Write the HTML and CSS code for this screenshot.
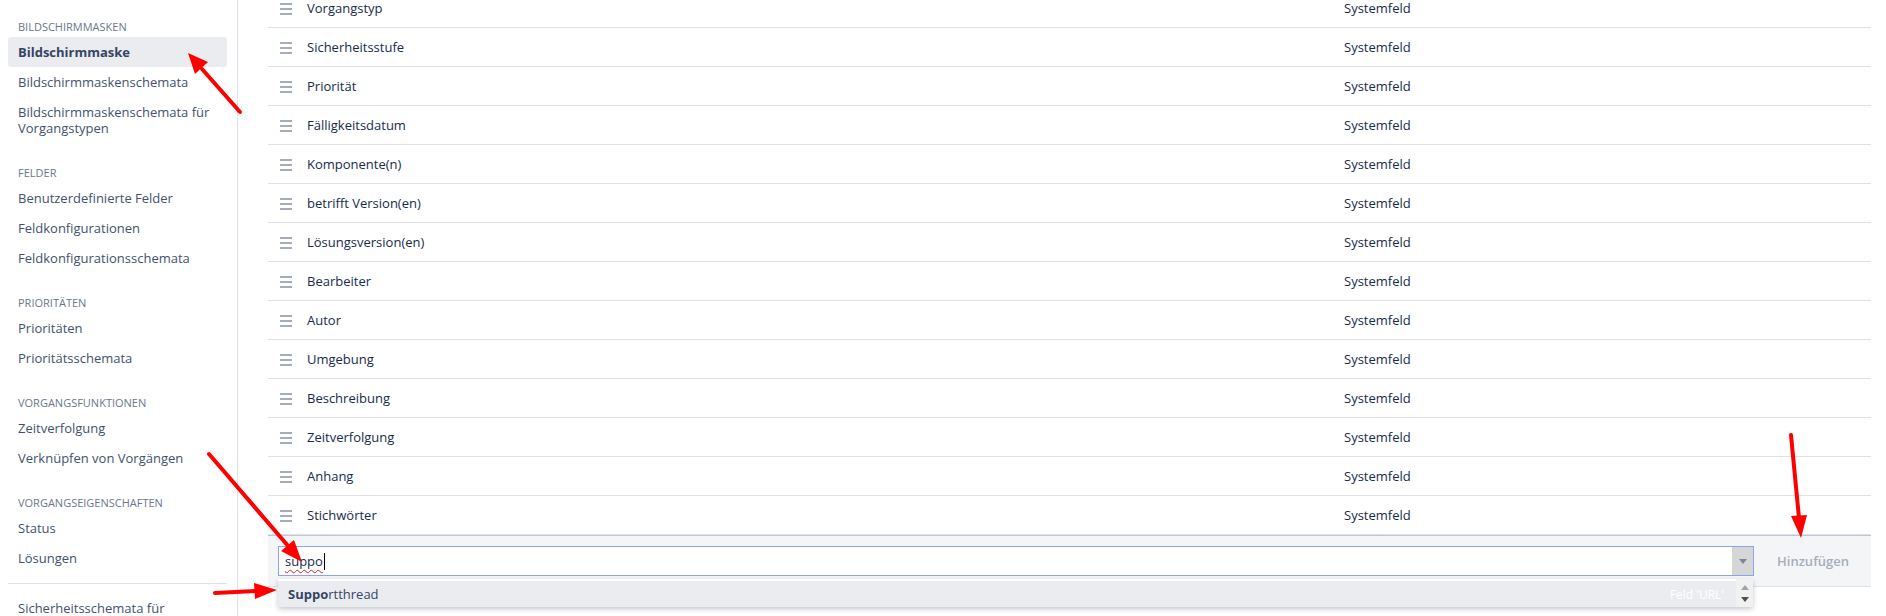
FILE: index.html
```html
<!DOCTYPE html>
<html lang="de">
<head>
<meta charset="utf-8">
<title>Bildschirmmaske</title>
<link rel="stylesheet" href="styles.css">
</head>
<body>
<div class="page">
  <aside class="sidebar">
    <div class="section">
      <h4 class="sec-title">Bildschirmmasken</h4>
      <ul class="nav">
        <li class="nav-item active">Bildschirmmaske</li>
        <li class="nav-item">Bildschirmmaskenschemata</li>
        <li class="nav-item">Bildschirmmaskenschemata für Vorgangstypen</li>
      </ul>
    </div>
    <div class="section">
      <h4 class="sec-title">Felder</h4>
      <ul class="nav">
        <li class="nav-item">Benutzerdefinierte Felder</li>
        <li class="nav-item">Feldkonfigurationen</li>
        <li class="nav-item">Feldkonfigurationsschemata</li>
      </ul>
    </div>
    <div class="section">
      <h4 class="sec-title">Prioritäten</h4>
      <ul class="nav">
        <li class="nav-item">Prioritäten</li>
        <li class="nav-item">Prioritätsschemata</li>
      </ul>
    </div>
    <div class="section">
      <h4 class="sec-title">Vorgangsfunktionen</h4>
      <ul class="nav">
        <li class="nav-item">Zeitverfolgung</li>
        <li class="nav-item">Verknüpfen von Vorgängen</li>
      </ul>
    </div>
    <div class="section">
      <h4 class="sec-title">Vorgangseigenschaften</h4>
      <ul class="nav">
        <li class="nav-item">Status</li>
        <li class="nav-item">Lösungen</li>
      </ul>
    </div>
    <hr class="sep">
    <ul class="nav">
      <li class="nav-item last">Sicherheitsschemata für</li>
    </ul>
  </aside>

  <main class="main">
    <div class="fields">
      <div class="row"><span class="handle"><svg viewBox="0 0 12 12"><rect y="0" width="12" height="2"/><rect y="5" width="12" height="2"/><rect y="10" width="12" height="2"/></svg></span><span class="name">Vorgangstyp</span><span class="type">Systemfeld</span></div>
      <div class="row"><span class="handle"><svg viewBox="0 0 12 12"><rect y="0" width="12" height="2"/><rect y="5" width="12" height="2"/><rect y="10" width="12" height="2"/></svg></span><span class="name">Sicherheitsstufe</span><span class="type">Systemfeld</span></div>
      <div class="row"><span class="handle"><svg viewBox="0 0 12 12"><rect y="0" width="12" height="2"/><rect y="5" width="12" height="2"/><rect y="10" width="12" height="2"/></svg></span><span class="name">Priorität</span><span class="type">Systemfeld</span></div>
      <div class="row"><span class="handle"><svg viewBox="0 0 12 12"><rect y="0" width="12" height="2"/><rect y="5" width="12" height="2"/><rect y="10" width="12" height="2"/></svg></span><span class="name">Fälligkeitsdatum</span><span class="type">Systemfeld</span></div>
      <div class="row"><span class="handle"><svg viewBox="0 0 12 12"><rect y="0" width="12" height="2"/><rect y="5" width="12" height="2"/><rect y="10" width="12" height="2"/></svg></span><span class="name">Komponente(n)</span><span class="type">Systemfeld</span></div>
      <div class="row"><span class="handle"><svg viewBox="0 0 12 12"><rect y="0" width="12" height="2"/><rect y="5" width="12" height="2"/><rect y="10" width="12" height="2"/></svg></span><span class="name">betrifft Version(en)</span><span class="type">Systemfeld</span></div>
      <div class="row"><span class="handle"><svg viewBox="0 0 12 12"><rect y="0" width="12" height="2"/><rect y="5" width="12" height="2"/><rect y="10" width="12" height="2"/></svg></span><span class="name">Lösungsversion(en)</span><span class="type">Systemfeld</span></div>
      <div class="row"><span class="handle"><svg viewBox="0 0 12 12"><rect y="0" width="12" height="2"/><rect y="5" width="12" height="2"/><rect y="10" width="12" height="2"/></svg></span><span class="name">Bearbeiter</span><span class="type">Systemfeld</span></div>
      <div class="row"><span class="handle"><svg viewBox="0 0 12 12"><rect y="0" width="12" height="2"/><rect y="5" width="12" height="2"/><rect y="10" width="12" height="2"/></svg></span><span class="name">Autor</span><span class="type">Systemfeld</span></div>
      <div class="row"><span class="handle"><svg viewBox="0 0 12 12"><rect y="0" width="12" height="2"/><rect y="5" width="12" height="2"/><rect y="10" width="12" height="2"/></svg></span><span class="name">Umgebung</span><span class="type">Systemfeld</span></div>
      <div class="row"><span class="handle"><svg viewBox="0 0 12 12"><rect y="0" width="12" height="2"/><rect y="5" width="12" height="2"/><rect y="10" width="12" height="2"/></svg></span><span class="name">Beschreibung</span><span class="type">Systemfeld</span></div>
      <div class="row"><span class="handle"><svg viewBox="0 0 12 12"><rect y="0" width="12" height="2"/><rect y="5" width="12" height="2"/><rect y="10" width="12" height="2"/></svg></span><span class="name">Zeitverfolgung</span><span class="type">Systemfeld</span></div>
      <div class="row"><span class="handle"><svg viewBox="0 0 12 12"><rect y="0" width="12" height="2"/><rect y="5" width="12" height="2"/><rect y="10" width="12" height="2"/></svg></span><span class="name">Anhang</span><span class="type">Systemfeld</span></div>
      <div class="row"><span class="handle"><svg viewBox="0 0 12 12"><rect y="0" width="12" height="2"/><rect y="5" width="12" height="2"/><rect y="10" width="12" height="2"/></svg></span><span class="name">Stichwörter</span><span class="type">Systemfeld</span></div>

      <div class="add-row">
        <div class="picker">
          <div class="picker-input"><span class="typed">suppo</span><span class="caret"></span></div>
          <div class="picker-toggle"><svg viewBox="0 0 8 5"><path d="M0 0h8L4 5z"/></svg></div>
          <div class="suggestions">
            <div class="suggestion"><span class="s-label"><b>Suppo</b>rtthread</span><span class="s-meta">Feld 'URL'</span></div>
            <div class="scroller">
              <svg class="up" viewBox="0 0 8 5"><path d="M0 5h8L4 0z"/></svg>
              <svg class="down" viewBox="0 0 8 5"><path d="M0 0h8L4 5z"/></svg>
            </div>
          </div>
        </div>
        <button class="add-btn" disabled>Hinzufügen</button>
      </div>
    </div>
  </main>

  <svg class="annotations" viewBox="0 0 1886 616">
    <g stroke="#f00" stroke-width="4" stroke-linecap="round" fill="none">
      <line x1="240" y1="112" x2="202" y2="69"/>
      <line x1="209" y1="454" x2="289" y2="547"/>
      <line x1="215" y1="593" x2="256" y2="591"/>
      <line x1="1791" y1="435" x2="1799" y2="518"/>
    </g>
    <g fill="#f00">
      <polygon points="188,53 208,62 195,74"/>
      <polygon points="302,562 281,551 294,540"/>
      <polygon points="277,590 255,599 254,583"/>
      <polygon points="1801,538 1791,516 1807,515"/>
    </g>
  </svg>
</div>
</body>
</html>
```

FILE: styles.css
```css
* { box-sizing: border-box; }

html, body {
  margin: 0;
  padding: 0;
  background: #fff;
}

body {
  font-family: "Open Sans", "Noto Sans", "Liberation Sans", sans-serif;
  font-size: 13px;
  color: #172b4d;
}

.page {
  position: relative;
  display: flex;
  width: 1886px;
  height: 616px;
  overflow: hidden;
}

/* Sidebar */
.sidebar {
  flex: 0 0 238px;
  border-right: 1px solid #dfe1e6;
  padding: 17px 10px 0 8px;
}

.section + .section {
  margin-top: 20px;
}

.sec-title {
  margin: 0;
  padding: 0 10px;
  font-size: 11px;
  font-weight: 400;
  line-height: 20px;
  text-transform: uppercase;
  color: #6b778c;
  letter-spacing: 0;
}

.nav {
  list-style: none;
  margin: 0;
  padding: 0;
}

.nav-item {
  padding: 7px 10px;
  line-height: 16px;
  color: #42526e;
  border-radius: 3px;
}

.nav-item.active {
  background: #ebecf0;
  font-weight: 700;
  color: #344563;
}

.nav-item.last {
  padding-top: 6px;
}

.sep {
  border: 0;
  border-top: 1px solid #dfe1e6;
  margin: 10px 0 10px 0;
  height: 0;
}

/* Main */
.main {
  flex: 1;
  padding: 0 15px 0 30px;
}

.fields {
  margin-top: -11px;
}

.row {
  display: grid;
  grid-template-columns: 39px 1037px 1fr;
  align-items: center;
  height: 39px;
  border-bottom: 1px solid #dfe1e6;
}

.handle {
  display: flex;
  padding-left: 12px;
}

.handle svg {
  width: 12px;
  height: 12px;
  fill: #a5adba;
  margin-top: 2px;
}

.name, .type {
  line-height: 20px;
  white-space: nowrap;
}

/* Add row */
.add-row {
  display: flex;
  align-items: center;
  background: #f4f5f7;
  border-top: 1px solid #c1c7d0;
  border-bottom: 1px solid #dfe1e6;
  padding: 10px 6px 10px 10px;
}

.picker {
  position: relative;
  flex: 0 0 1476px;
  height: 30px;
  display: flex;
  background: #fff;
  border: 1px solid #8da2f0;
}

.picker-input {
  flex: 1;
  display: flex;
  align-items: center;
  padding-left: 6px;
}

.typed {
  text-decoration: underline wavy #e02020;
  text-decoration-skip-ink: none;
  text-underline-offset: 3px;
  text-decoration-thickness: 1px;
}

.caret {
  display: inline-block;
  width: 1px;
  height: 17px;
  background: #000;
  margin-left: 1px;
}

.picker-toggle {
  flex: 0 0 21px;
  background: #d6d6d6;
  display: flex;
  align-items: center;
  justify-content: center;
}

.picker-toggle svg {
  width: 8px;
  height: 5px;
  fill: #7a869a;
}

.suggestions {
  position: absolute;
  top: 32px;
  left: -1px;
  width: 1475px;
  height: 28px;
  display: flex;
  background: #fff;
  box-shadow: 0 2px 5px rgba(9, 30, 66, 0.25);
  border-radius: 0 0 3px 3px;
}

.suggestion {
  flex: 1;
  display: flex;
  align-items: center;
  justify-content: space-between;
  background: #ebecf0;
  border-top: 2px solid #fff;
  padding: 0 12px 0 10px;
  color: #344563;
}

.s-label b {
  font-weight: 700;
}

.s-meta {
  color: #fff;
  font-size: 12px;
}

.scroller {
  flex: 0 0 17px;
  background: #f1f1f1;
  display: flex;
  flex-direction: column;
  align-items: center;
  justify-content: space-between;
  padding: 6px 0 5px;
}

.scroller svg {
  width: 8px;
  height: 5px;
}

.scroller .up { fill: #a3a3a3; }
.scroller .down { fill: #505050; }

.add-btn {
  margin-left: 11px;
  height: 30px;
  padding: 0 12px;
  border: 0;
  background: transparent;
  font-family: inherit;
  font-size: 13px;
  font-weight: 600;
  color: #a5adba;
}

/* Annotation overlay */
.annotations {
  position: absolute;
  top: 0;
  left: 0;
  width: 1886px;
  height: 616px;
  pointer-events: none;
}
```
